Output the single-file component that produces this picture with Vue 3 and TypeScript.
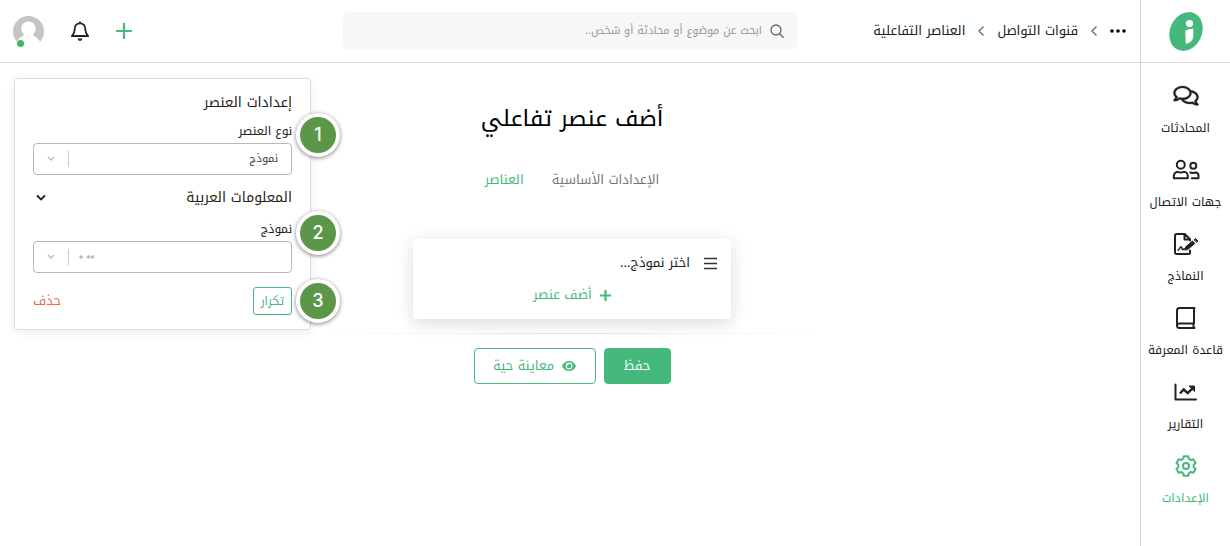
<script setup lang="ts">
import { ref } from 'vue'

interface NavItem {
  id: string
  label: string
}

const navItems: NavItem[] = [
  { id: 'chats', label: 'المحادثات' },
  { id: 'contacts', label: 'جهات الاتصال' },
  { id: 'forms', label: 'النماذج' },
  { id: 'kb', label: 'قاعدة المعرفة' },
  { id: 'reports', label: 'التقارير' },
  { id: 'settings', label: 'الإعدادات' },
]
const activeNav = ref('settings')
const query = ref('')
const elementType = ref('form')
const form = ref('')
</script>

<template>
  <div class="app" dir="rtl" lang="ar">
    <aside class="sidebar">
      <a class="logo" href="#" aria-label="الرئيسية">
        <svg width="38" height="42" viewBox="0 0 38 42">
          <ellipse cx="19" cy="21.500" rx="16" ry="20" transform="rotate(24 19 21.500)" fill="#45b97c" />
          <circle cx="22.500" cy="13.500" r="3.600" fill="#fff" />
          <path d="M18.300 20.800Q22 18.500 26.300 18.800V27Q25.500 32.500 18.700 33.800Z" fill="#fff" />
        </svg>
      </a>
      <nav class="nav">
        <a
          v-for="item in navItems"
          :key="item.id"
          href="#"
          class="nav-item"
          :class="{ active: item.id === activeNav }"
          @click.prevent="activeNav = item.id"
        >
          <svg v-if="item.id === 'chats'" class="nav-icon" viewBox="-32 -12 640 549" fill="currentColor" stroke="currentColor" stroke-width="6">
            <path d="M532 386.200c27.500-27.100 44-61.100 44-98.200 0-80-76.500-146.100-176.200-157.900C368.300 72.500 294.300 32 208 32 93.100 32 0 103.600 0 192c0 37 16.500 71 44 98.200-15.300 30.700-37.300 54.500-37.700 54.900-6.300 6.700-8.100 16.500-4.400 25 3.600 8.500 12 14 21.200 14 53.500 0 96.700-20.200 125.200-38.800 9.200 2.100 18.700 3.700 28.400 4.900C208.100 407.600 281.800 448 368 448c20.800 0 40.800-2.400 59.800-6.800C456.300 459.700 499.400 480 553 480c9.200 0 17.500-5.500 21.200-14 3.600-8.500 1.900-18.300-4.400-25-.4-.3-22.500-24.100-37.800-54.800zm-392.800-92.300L122.100 305c-14.100 9.100-28.500 16.300-43.100 21.400 2.700-4.700 5.400-9.700 8-14.800l15.500-31.100L77.700 256C64.200 242.600 48 220.700 48 192c0-60.700 73.300-112 160-112s160 51.300 160 112-73.300 112-160 112c-16.500 0-33-1.900-49-5.600l-19.800-4.500zM498.300 352l-24.700 24.400 15.500 31.100c2.600 5.100 5.300 10.100 8 14.800-14.600-5.100-29-12.300-43.100-21.400l-17.100-11.100-19.900 4.600c-16 3.700-32.500 5.600-49 5.600-54 0-102.200-20.100-131.300-49.700C338 339.500 416 272.900 416 192c0-3.400-.4-6.700-.7-10C479.700 196.500 528 238.800 528 288c0 28.700-16.200 50.600-29.700 64z" />
          </svg>
          <svg v-else class="nav-icon" viewBox="0 0 28 24" fill="none" stroke="currentColor" stroke-width="2" stroke-linejoin="round" stroke-linecap="round">
            <template v-if="item.id === 'contacts'">
              <circle cx="8.800" cy="6.800" r="4" />
              <path d="M1.800 20.300v-2.300c0-2.300 1.800-4.200 4.200-4.200 1.900.8 3.700.8 5.600 0 2.400 0 4.200 1.900 4.200 4.200v2.300Z" />
              <circle cx="21.300" cy="7.800" r="3" />
              <path d="M18.200 14.500c2.100.6 3.700.6 5.500 0 1.600.1 2.800 1.500 2.800 3.200v2.600h-6.700" />
            </template>
            <template v-else-if="item.id === 'forms'">
              <path d="M18 18.500v2c0 .8-.6 1.500-1.500 1.500h-12c-.8 0-1.500-.7-1.500-1.500v-17C3 2.700 3.700 2 4.500 2h8.300L18 7.200v1.300M12.500 2v5.500H18" />
              <path d="M6 18.300c1.200 0 2-3.500 3-3.500s.8 2.800 1.700 2.800 1-.8 1.800-.8" stroke-width="1.500" />
              <path d="M13 17.800l.7-3 6.800-5.800 2.300 2.500-6.800 5.800Z" fill="currentColor" stroke-width="1" />
              <path d="M22.500 7.500l1.100-.9 2.300 2.500-1.100.9Z" fill="currentColor" stroke-width="1" />
            </template>
            <template v-else-if="item.id === 'kb'">
              <path d="M22.500 2H7.500C6 2 5 3 5 4.500v15C5 21 6 22 7.500 22h15M22 2v15.500M21.500 17.500V22M22 17.500H7.500C6 17.500 5 18.500 5 19.700" />
            </template>
            <template v-else-if="item.id === 'reports'">
              <path d="M3.500 4.500v15h20.500" />
              <path d="M8 13.500l3.700-4 4 3.700 5-5" stroke-width="2.400" stroke-linecap="butt" stroke-linejoin="miter" />
              <path d="M17.500 6H22.500V11Z" fill="currentColor" stroke-width="1" />
            </template>
            <template v-else>
              <path d="M11.750 2.260H16.250L16.700 4.700L19 6.020L21.310 5.180L23.560 9.080L21.680 10.650V13.350L23.560 14.920L21.310 18.820L19 17.980L16.700 19.300L16.250 21.740H11.750L11.300 19.300L9 17.980L6.690 18.820L4.440 14.920L6.320 13.350V10.650L4.440 9.080L6.690 5.180L9 6.020L11.300 4.700Z" />
              <circle cx="14" cy="12" r="3" />
            </template>
          </svg>
          <span>{{ item.label }}</span>
        </a>
      </nav>
    </aside>

    <div class="page">
      <header class="topbar">
        <nav class="crumbs" aria-label="مسار التنقل">
          <button class="more" type="button" aria-label="المزيد">
            <svg width="16" height="4" viewBox="0 0 16 4"><circle cx="2" cy="2" r="1.800" /><circle cx="8" cy="2" r="1.800" /><circle cx="14" cy="2" r="1.800" /></svg>
          </button>
          <svg class="sep" viewBox="0 0 8 12"><path d="M6.500 1.500L2 6l4.500 4.500" /></svg>
          <a href="#">قنوات التواصل</a>
          <svg class="sep" viewBox="0 0 8 12"><path d="M6.500 1.500L2 6l4.500 4.500" /></svg>
          <a href="#">العناصر التفاعلية</a>
        </nav>
        <label class="search">
          <svg width="14" height="14" viewBox="0 0 14 14" fill="none" stroke="#666" stroke-width="1.300" stroke-linecap="round"><circle cx="6" cy="6" r="5" /><path d="M9.700 9.700L13.200 13.200" /></svg>
          <input v-model="query" type="text" aria-label="بحث" placeholder="ابحث عن موضوع أو محادثة أو شخص.." />
        </label>
        <div class="tools">
          <button type="button" aria-label="إضافة">
            <svg width="16" height="16" viewBox="0 0 16 16" stroke="#45b97c" stroke-width="2.200"><path d="M8 0V16M0 8H16" /></svg>
          </button>
          <button type="button" aria-label="التنبيهات">
            <svg width="20" height="22" viewBox="0 0 20 22" fill="none" stroke="#222" stroke-width="1.800" stroke-linejoin="round"><path d="M10 3.300c-3.200 0-5.300 2.500-5.300 5.600 0 4.500-1.700 5.600-2.900 7.100h16.400c-1.200-1.500-2.900-2.600-2.900-7.100 0-3.100-2.100-5.600-5.300-5.600ZM10 1.500v2" /><path d="M7.600 18.500h4.800a2.400 2.400 0 0 1-4.800 0Z" fill="#222" stroke="none" /></svg>
          </button>
          <button type="button" class="avatar" aria-label="الحساب">
            <svg width="31" height="31" viewBox="0 0 31 31">
              <circle cx="15.500" cy="15.500" r="15.500" fill="#c5c5c5" />
              <path d="M15.500 5.500c-4.200 0-7.200 3-7.200 7 0 2.600 1.300 4.500 2.600 5.800-.3 2.300-4.400 2.500-6.900 7.300V31h23v-5.400c-2.500-4.800-6.600-5-6.900-7.300 1.300-1.300 2.600-3.200 2.600-5.800 0-4-3-7-7.200-7Z" fill="#fff" />
            </svg>
            <span class="online"></span>
          </button>
        </div>
      </header>

      <main class="content">
        <section class="builder">
          <h1>أضف عنصر تفاعلي</h1>
          <div class="tabs">
            <a href="#">الإعدادات الأساسية</a>
            <a href="#" class="current">العناصر</a>
          </div>
          <div class="card">
            <div class="card-row">
              <svg width="13" height="13" viewBox="0 0 13 13" stroke="#333" stroke-width="1.600"><path d="M0 1.500H13M0 6.500H13M0 11.500H13" /></svg>
              <span>اختر نموذج...</span>
            </div>
            <button type="button" class="add">
              <svg width="11" height="11" viewBox="0 0 11 11" stroke="currentColor" stroke-width="2.200"><path d="M5.500 0V11M0 5.500H11" /></svg>
              <span>أضف عنصر</span>
            </button>
          </div>
          <hr />
          <div class="actions">
            <button type="button" class="save">حفظ</button>
            <button type="button" class="preview">
              <svg width="14" height="10" viewBox="0 0 14 10"><path d="M7 0C3.800 0 1.200 2 0 5c1.200 3 3.800 5 7 5s5.800-2 7-5C12.800 2 10.200 0 7 0Z" fill="currentColor" /><circle cx="7" cy="5" r="3.400" fill="#fff" /><path d="M7 2.800A2.200 2.200 0 1 1 4.900 4.400 1.200 1.200 0 0 0 6.500 2.800Z" fill="currentColor" /></svg>
              <span>معاينة حية</span>
            </button>
          </div>
        </section>

        <section class="panel">
          <h2>إعدادات العنصر</h2>
          <div class="field">
            <label for="type">نوع العنصر</label>
            <span class="badge">1</span>
            <div class="select">
              <select id="type" v-model="elementType"><option value="form">نموذج</option></select>
              <span class="arrow"><svg width="8" height="6" viewBox="0 0 8 6"><path d="M1 1l3 3 3-3" /></svg></span>
            </div>
          </div>
          <button type="button" class="group">
            <span>المعلومات العربية</span>
            <svg width="10" height="8" viewBox="0 0 10 8" fill="none" stroke="#222" stroke-width="1.800"><path d="M1 1.500l4 4 4-4" /></svg>
          </button>
          <div class="field">
            <label for="form">نموذج</label>
            <span class="badge">2</span>
            <div class="select">
              <select id="form" v-model="form"><option value=""></option></select>
              <span class="arrow">
                <svg class="loading" width="16" height="4" viewBox="0 0 16 4"><circle cx="2" cy="2" r="1.800" /><circle cx="9.500" cy="2" r="1.800" /><circle cx="13.500" cy="2" r="1.800" /></svg>
                <svg width="8" height="6" viewBox="0 0 8 6"><path d="M1 1l3 3 3-3" /></svg>
              </span>
            </div>
          </div>
          <div class="panel-actions">
            <button type="button" class="repeat">تكرار</button>
            <span class="badge">3</span>
            <button type="button" class="delete">حذف</button>
          </div>
        </section>
      </main>
    </div>
  </div>
</template>

<style>
body {
  background: #fff;
}
</style>

<style scoped>
.app {
  display: flex;
  min-height: 100vh;
  box-sizing: border-box;
  color: #222;
  font-family: "Noto Kufi Arabic", "Droid Arabic Kufi", "Open Sans", "DejaVu Sans", sans-serif;
  font-size: 13px;
  line-height: 20px;
}
.app * {
  box-sizing: border-box;
}
button {
  padding: 0;
  border: 0;
  background: none;
  color: inherit;
  font: inherit;
  cursor: pointer;
}
a {
  color: inherit;
  text-decoration: none;
}
.app svg {
  display: block;
  flex: none;
}
.sidebar {
  flex: 0 0 90px;
  border-left: 1px solid #d5d5d5;
}
.logo {
  display: flex;
  align-items: center;
  justify-content: center;
  height: 63px;
  border-bottom: 1px solid #d8d8d8;
}
.nav {
  display: flex;
  flex-direction: column;
  gap: 20px;
  padding-top: 21px;
}
.nav-item {
  display: flex;
  flex-direction: column;
  align-items: center;
  gap: 10px;
  font-size: 12px;
  white-space: nowrap;
}
.nav-icon {
  width: 28px;
  height: 24px;
}
.active {
  color: #45b97c;
}
.page {
  flex: 1;
  min-width: 0;
}
.topbar {
  display: grid;
  grid-template-columns: 1fr 454px 1fr;
  align-items: center;
  height: 63px;
  border-bottom: 1px solid #d8d8d8;
}
.crumbs {
  display: flex;
  align-items: center;
  gap: 12px;
  padding-right: 14px;
  white-space: nowrap;
}
.sep {
  width: 8px;
  height: 12px;
  fill: none;
  stroke: #777;
  stroke-width: 1.5px;
}
.search {
  display: flex;
  align-items: center;
  gap: 8px;
  height: 38px;
  padding: 0 13px;
  border-radius: 6px;
  background: #f7f7f7;
}
.search input {
  flex: 1;
  min-width: 0;
  padding: 0;
  border: 0;
  outline: 0;
  background: none;
  font: inherit;
  font-size: 11px;
}
.search input::placeholder {
  color: #999;
}
.tools {
  display: flex;
  justify-content: flex-end;
  align-items: center;
  gap: 26px;
  padding-left: 13px;
}
.avatar {
  position: relative;
}
.online {
  position: absolute;
  left: 4px;
  bottom: 0;
  width: 7px;
  height: 7px;
  border-radius: 50%;
  background: #3dbb56;
}
.content {
  display: grid;
  grid-template-columns: 1fr 516px 1fr;
  align-items: start;
}
.builder {
  grid-column: 2;
  display: flex;
  flex-direction: column;
  align-items: center;
  padding: 36px 0 0 4px;
}
h1 {
  margin: 0;
  color: #000;
  font-size: 23px;
  font-weight: 400;
  line-height: 40px;
}
.tabs {
  display: flex;
  gap: 28px;
  margin-top: 31px;
  color: #777;
}
.tabs .current {
  color: #45b97c;
}
.card {
  width: 318px;
  margin-top: 49px;
  padding: 14px;
  border-radius: 4px;
  background: #fff;
  box-shadow: 0 4px 18px rgba(0, 0, 0, 0.15);
}
.card-row {
  display: flex;
  align-items: center;
  gap: 14px;
}
.add {
  display: flex;
  align-items: center;
  gap: 8px;
  margin: 12px auto 0;
  color: #45b97c;
}
hr {
  align-self: stretch;
  height: 1px;
  margin: 14px 0;
  border: 0;
  background: linear-gradient(to right, #fff, #e2e2e2, #fff);
}
.actions {
  display: flex;
  gap: 8px;
}
.save,
.preview {
  display: flex;
  align-items: center;
  justify-content: center;
  gap: 8px;
  height: 36px;
  border: 1px solid #45b97c;
  border-radius: 4px;
}
.save {
  width: 67px;
  background: #45b97c;
  color: #fff;
}
.preview {
  width: 122px;
  color: #45b97c;
}
.panel {
  justify-self: end;
  width: 297px;
  margin: 15px 0 0 14px;
  padding: 14px 18px;
  border: 1px solid #ddd;
  border-radius: 4px;
  background: #fff;
  box-shadow: 0 2px 10px rgba(0, 0, 0, 0.08);
}
h2 {
  margin: 0;
  font-size: 14px;
  font-weight: 400;
  line-height: 20px;
}
.field {
  position: relative;
  margin-top: 8px;
}
.field label {
  display: block;
  margin-bottom: 2px;
  font-size: 12px;
}
.select {
  position: relative;
}
.select select {
  display: block;
  width: 100%;
  height: 32px;
  padding: 0 13px;
  border: 1px solid #b8b8b8;
  border-radius: 4px;
  appearance: none;
  background: #fff;
  color: #444;
  font: inherit;
  font-size: 11px;
}
.arrow {
  position: absolute;
  top: 8px;
  left: 14px;
  display: flex;
  align-items: center;
  height: 16px;
  pointer-events: none;
}
.arrow svg {
  fill: none;
  stroke: #bbb;
  stroke-width: 1.3px;
}
.arrow::after {
  content: "";
  order: 1;
  width: 1px;
  height: 16px;
  margin: 0 13px;
  background: #ccc;
}
.arrow svg:last-child {
  order: 2;
}
.arrow .loading {
  order: 0;
  margin-left: -3px;
  fill: #bbb;
  stroke: none;
}
.group {
  display: flex;
  align-items: center;
  justify-content: space-between;
  width: 100%;
  margin-top: 13px;
  padding-left: 3px;
  font-size: 14px;
}
.group + .field {
  margin-top: 11px;
}
.panel-actions {
  position: relative;
  display: flex;
  align-items: center;
  justify-content: space-between;
  margin-top: 14px;
}
.repeat {
  width: 39px;
  height: 28px;
  border: 1px solid #45b97c;
  border-radius: 3px;
  color: #45b97c;
  font-size: 12px;
}
.delete {
  color: #f2654f;
}
.badge {
  position: absolute;
  top: -8px;
  right: -48px;
  display: flex;
  align-items: center;
  justify-content: center;
  width: 44px;
  height: 44px;
  border: 4px solid #fff;
  border-radius: 50%;
  background: #5c9648;
  box-shadow: 0 1px 4px rgba(0, 0, 0, 0.5);
  color: #fff;
  font-family: Inter, Roboto, sans-serif;
  font-size: 18px;
  font-weight: 500;
}
</style>
